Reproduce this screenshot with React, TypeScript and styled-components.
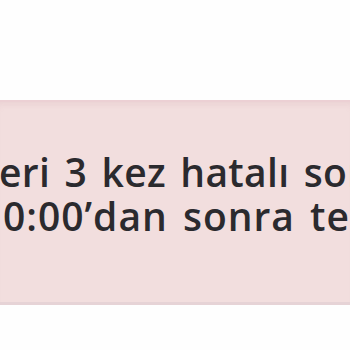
import React from "react";
import styled, { createGlobalStyle } from "styled-components";

const Global = createGlobalStyle`
  html, body { margin: 0; padding: 0; background: #fefefe; }
  body { width: 350px; height: 350px; overflow: hidden; }
`;

const Page = styled.div`
  width: 350px;
  height: 350px;
  padding-top: 100px;
  box-sizing: border-box;
`;

const Alert = styled.div`
  height: 205px;
  box-sizing: border-box;
  background: #f2dede;
  border-top: 2px solid #ecd0d4;
  border-bottom: 3px solid #e6d3d6;
  box-shadow: inset 0 6px 6px -4px rgba(200, 150, 160, 0.18);
  overflow: hidden;
  padding-top: 48px;
`;

const Line = styled.div<{ $indent: number; $spacing: number }>`
  font-family: "Open Sans", "Noto Sans", sans-serif;
  font-weight: 600;
  font-size: 39px;
  line-height: 44px;
  letter-spacing: ${(p) => p.$spacing}px;
  word-spacing: 4px;
  color: #2b2a2e;
  white-space: nowrap;
  overflow: hidden;
  text-indent: ${(p) => p.$indent}px;
`;

export default function App() {
  return (
    <>
      <Global />
      <Page>
        <Alert>
          <Line $indent={-1} $spacing={0.3}>eri 3 kez hatalı sonuç</Line>
          <Line $indent={3} $spacing={1}>0:00’dan sonra tekrar</Line>
        </Alert>
      </Page>
    </>
  );
}
